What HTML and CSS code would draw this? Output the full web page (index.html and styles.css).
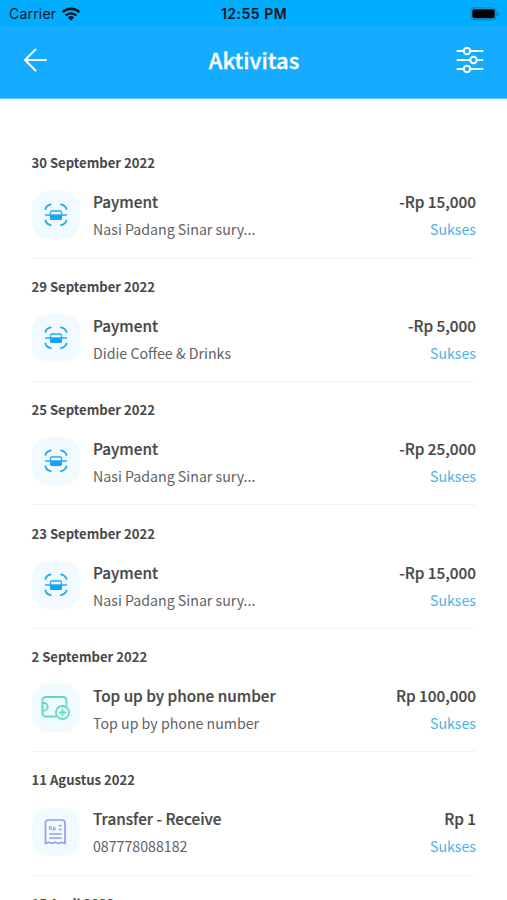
FILE: index.html
```html
<!DOCTYPE html>
<html lang="id">
<head>
<meta charset="utf-8">
<title>Aktivitas</title>
<link rel="stylesheet" href="styles.css">
</head>
<body>
<svg class="defs" width="0" height="0" aria-hidden="true">
  <symbol id="pay" viewBox="0 0 48 48">
    <g fill="none" stroke="#25a9ee" stroke-width="1.8" stroke-linecap="round">
      <path d="M13.500 18q.6-3.500 5.200-4.700M29 13.300q4.600 1.200 5.500 4.700M13.500 29.500q.6 3.500 5.200 4.700M29 34.200q4.600-1.200 5.500-4.700"/>
      <path d="M18.500 23.500v-2q0-1.500 1.500-1.500h8q1.500 0 1.500 1.500v2" stroke-width="1.300"/>
      <path d="M13.500 24h21" stroke-width="1.300"/>
    </g>
    <path d="M18 24h12v3.500q0 1.500-1.500 1.500h-9q-1.500 0-1.500-1.500z" fill="#12a5f5"/>
  </symbol>
  <symbol id="topup" viewBox="0 0 48 48">
    <g fill="none" stroke="#5fdcc0" stroke-width="1.800" stroke-linecap="round" stroke-linejoin="round">
      <path d="M34.500 21v-4.500q0-3.500-3.500-3.500H14q-3.500 0-3.500 3.500v12.500q0 3.500 3.500 3.500h9.500"/>
      <path d="M10.500 19h1.500a3.800 3.800 0 0 1 0 7.600H10.500"/>
      <circle cx="30.500" cy="28.500" r="6.500"/>
      <path d="M30.500 25.500v6M27.500 28.500h6"/>
    </g>
  </symbol>
  <symbol id="receipt" viewBox="0 0 48 48">
    <g fill="none" stroke="#8f9fec" stroke-width="1.700" stroke-linecap="round" stroke-linejoin="round">
      <path d="M13.500 35.500V15q0-3 3-3h13.500q3 0 3 3v20.500l-3-1.300-3.400 1.300-3.400-1.300-3.400 1.300-3.300-1.300z"/>
      <path d="M18 26h11M18 30h11M27.500 17.500h1.500M27.500 21.500h1.500"/>
    </g>
    <text x="16.500" y="22" class="rp">Rp</text>
  </symbol>
</svg>

<div class="status">
  <div class="carrier"><span>Carrier</span>
    <svg width="20" height="14" viewBox="0 0 20 14"><g fill="none" stroke="#06141f" stroke-width="2.400"><path d="M1.600 5.200a12 12 0 0 1 16.800 0M4.600 8.500a7.800 7.800 0 0 1 10.800 0"/></g><path d="M6.900 10.500a4.500 4.500 0 0 1 6.200 0L10 13.700z" fill="#06141f"/></svg>
  </div>
  <span class="clock">12:55 PM</span>
  <svg class="battery" width="30" height="14" viewBox="0 0 30 14"><rect x=".8" y=".8" width="25.400" height="12" rx="3.500" fill="none" stroke="#087db8" stroke-width="1"/><rect x="2.300" y="2.300" width="22.400" height="9" rx="2" fill="#000"/><path d="M27.700 4.700q3 2.200 0 4.400z" fill="#087db8"/></svg>
</div>
<header class="bar">
  <svg class="back" width="24" height="24" viewBox="0 0 24 24"><path d="M22 12H1.500M11.500 1.500L1 12l10.500 10.500" fill="none" stroke="#fff" stroke-width="1.900" stroke-linecap="round" stroke-linejoin="round"/></svg>
  <h1>Aktivitas</h1>
  <svg class="filter" width="28" height="28" viewBox="0 0 28 28"><g fill="none" stroke="#fff" stroke-width="2" stroke-linecap="round"><path d="M1.500 5h6M14.500 5h12M1.500 14h12.500M21 14h5.500M1.500 23h6M14.500 23h12"/><circle cx="11" cy="5" r="3.200"/><circle cx="17.500" cy="14" r="3.200"/><circle cx="11" cy="23" r="3.200"/></g></svg>
</header>

<main class="list">
  <section class="day"><h2>30 September 2022</h2><div class="entry"><svg class="icon"><use href="#pay"/></svg><div class="info"><b>Payment</b><span>Nasi Padang Sinar sury...</span></div><div class="amount"><b>-Rp 15,000</b><span>Sukses</span></div></div></section>
  <section class="day"><h2>29 September 2022</h2><div class="entry"><svg class="icon"><use href="#pay"/></svg><div class="info"><b>Payment</b><span>Didie Coffee &amp; Drinks</span></div><div class="amount"><b>-Rp 5,000</b><span>Sukses</span></div></div></section>
  <section class="day"><h2>25 September 2022</h2><div class="entry"><svg class="icon"><use href="#pay"/></svg><div class="info"><b>Payment</b><span>Nasi Padang Sinar sury...</span></div><div class="amount"><b>-Rp 25,000</b><span>Sukses</span></div></div></section>
  <section class="day"><h2>23 September 2022</h2><div class="entry"><svg class="icon"><use href="#pay"/></svg><div class="info"><b>Payment</b><span>Nasi Padang Sinar sury...</span></div><div class="amount"><b>-Rp 15,000</b><span>Sukses</span></div></div></section>
  <section class="day"><h2>2 September 2022</h2><div class="entry"><svg class="icon"><use href="#topup"/></svg><div class="info"><b>Top up by phone number</b><span>Top up by phone number</span></div><div class="amount"><b>Rp 100,000</b><span>Sukses</span></div></div></section>
  <section class="day"><h2>11 Agustus 2022</h2><div class="entry"><svg class="icon"><use href="#receipt"/></svg><div class="info"><b>Transfer - Receive</b><span>087778088182</span></div><div class="amount"><b>Rp 1</b><span>Sukses</span></div></div></section>
  <section class="day"><h2>15 April 2022</h2></section>
</main>
</body>
</html>
```
FILE: styles.css
```css
* { box-sizing: border-box; }
html, body { height: 900px; overflow: hidden; }
body {
  margin: 0;
  background: #fff;
  color: #484848;
  font-family: "Noto Sans CJK SC", "Noto Sans", sans-serif;
}
svg { display: block; flex: none; }
.defs { display: none; }

.status {
  height: 26px;
  padding: 1px 7px 0 9px;
  display: grid;
  grid-template-columns: 1fr auto 1fr;
  align-items: center;
  background: #00adff;
  color: #06141f;
  font: 14px/20px Inter, sans-serif;
}
.carrier { display: flex; align-items: center; gap: 5px; letter-spacing: .2px; }
.clock { font-weight: 600; letter-spacing: .5px; margin-right: 1px; }
.battery { justify-self: end; }

.bar {
  height: 73px;
  padding: 0 23px 5px 24px;
  display: grid;
  grid-template-columns: 1fr auto 1fr;
  align-items: center;
  background: #15acff;
  border-bottom: 1px solid #5cc4ff;
  color: #fff;
}
.bar h1 { margin: 0 0 1px; font-size: 22px; line-height: 32px; font-weight: 500; -webkit-text-stroke: .35px #fff; }
.filter { justify-self: end; }

.list { padding: 36.300px 31px 0 32px; }
.day { height: 123.400px; padding-top: 18.200px; border-bottom: 1px solid #f3f3f3; }
.day:last-child { padding-top: 18px; }
.day h2 { margin: 0 0 0 -.5px; font-size: 13.100px; line-height: 20px; font-weight: 700; white-space: nowrap; }
.entry { display: flex; margin-top: 17.200px; }
.icon { width: 48px; height: 48px; border-radius: 17px; background: #f0faff; }
.rp { font: 700 6px "Noto Sans", sans-serif; fill: #8f9fec; }
.info, .amount { display: flex; flex-direction: column; white-space: nowrap; margin-top: -1.300px; }
.info { margin-left: 13px; }
.amount { margin-left: auto; align-items: flex-end; }
.entry b { font-size: 15.300px; line-height: 25px; font-weight: 500; -webkit-text-stroke: .2px #484848; }
.entry span { font-size: 14.200px; line-height: 30px; color: #626262; }
.entry .amount span { color: #4fb1e6; }
```
